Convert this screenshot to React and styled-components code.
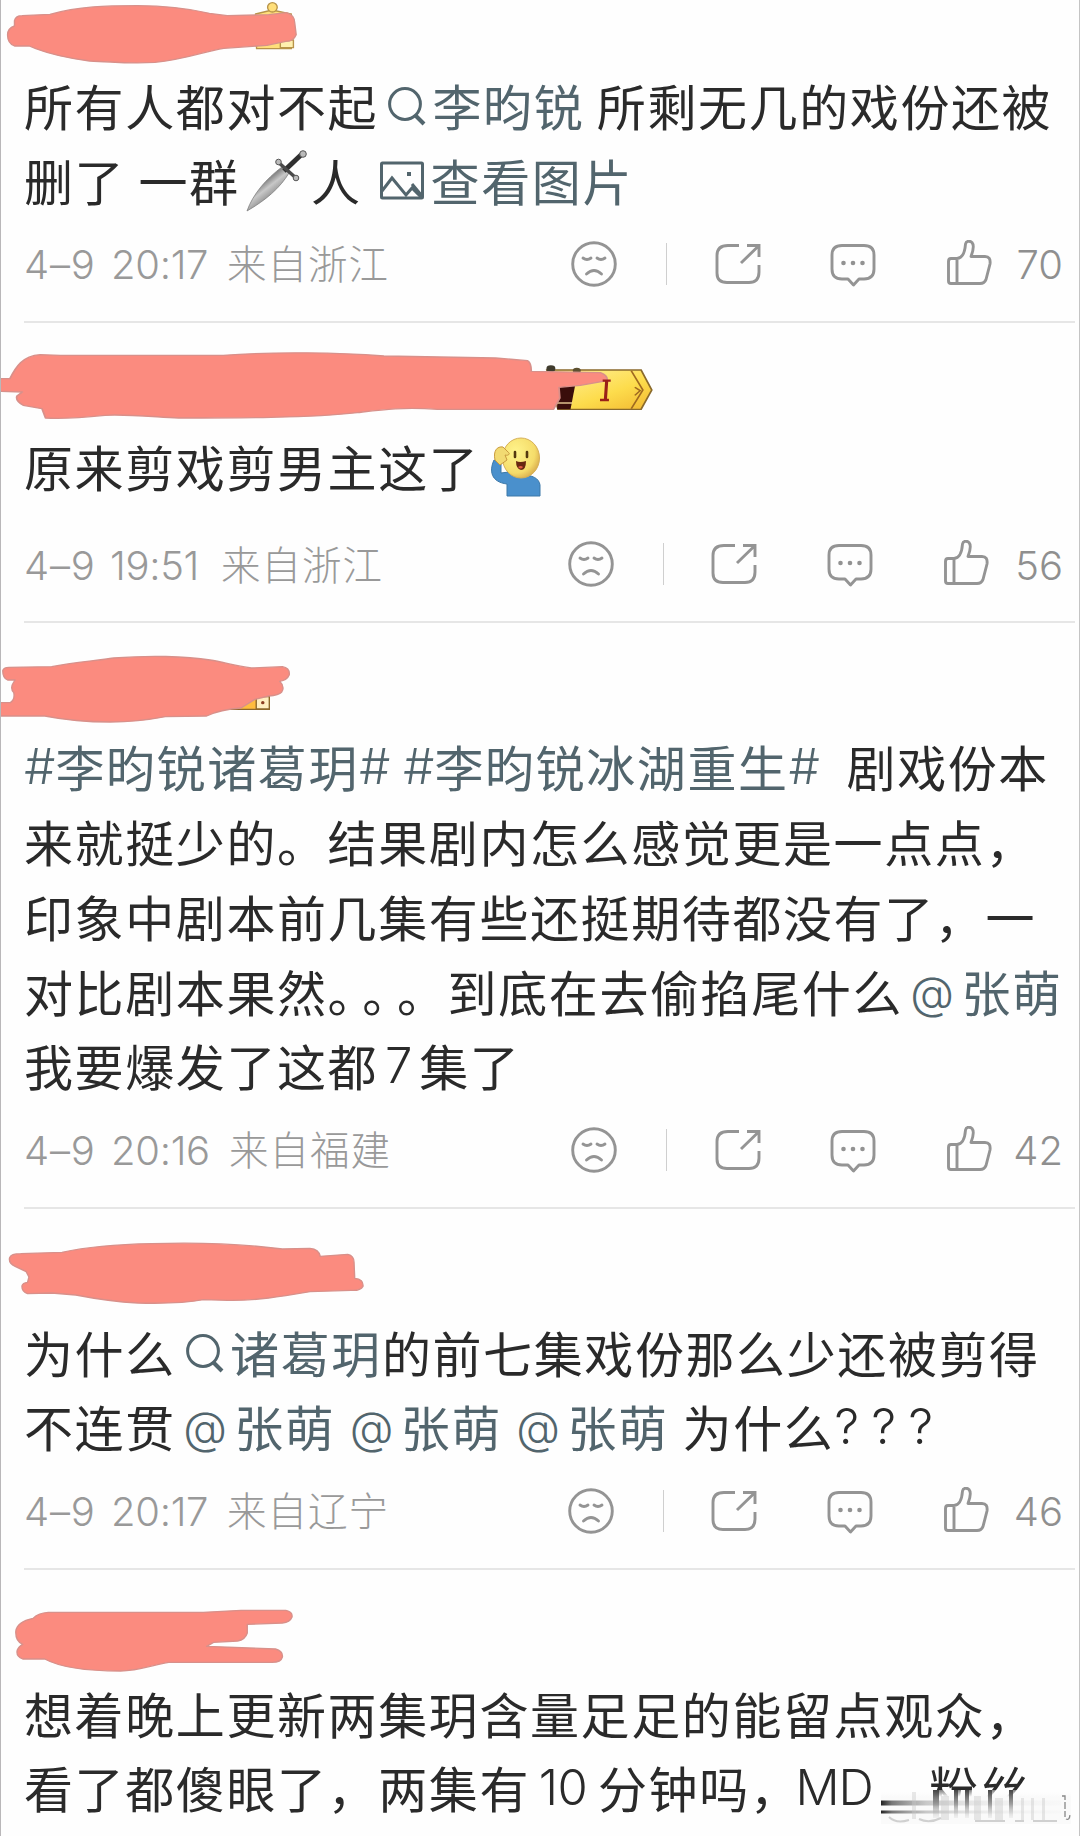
import styled, { createGlobalStyle } from "styled-components"

/* Styling*/
const GlobalStyle = createGlobalStyle`
body {
  margin: 0;
  background: #fefefe;
}
`;
const Page = styled.main`
box-sizing: border-box;
width: 1080px;
height: 1836px;
overflow: hidden;
border-left: 1px solid #b9b7b9;
border-right: 1px solid #c4c4c4;
background: #fefefe;
font-family: Inter, "Noto Sans CJK SC", sans-serif;
text-spacing-trim: space-all;
`;
const Comment = styled.article`
display: flex;
flex-direction: column;
`;
const Head = styled.header`
height: ${(p) => p.$height}px;
margin-left: -1px;
flex: none;
`;
const Scribble = styled.svg`
display: block;
height: 100%;
width: ${(p) => p.$width}px;
`;
const Body = styled.div`
padding: 0 0 ${(p) => p.$extra || 0}px 23px;
`;
const Line = styled.div`
position: relative;
display: flex;
align-items: center;
height: 74.8px;
white-space: pre;
`;
const Run = styled.span`
padding-bottom: 4px;
font-family: "Noto Sans CJK SC", sans-serif;
font-size: 49px;
line-height: 70.8px;
letter-spacing: ${(p) => p.$spacing ?? 1.6}px;
color: ${(p) => (p.$link ? "#52656d" : "#2a2a2a")};
`;
const Latin = styled(Run)`
flex: none;
width: ${(p) => p.$width}px;
padding-bottom: 2px;
font-family: Inter, sans-serif;
font-weight: 350;
text-align: ${(p) => p.$align || "center"};
`;
const At = styled(Latin)`
padding-bottom: 0;
font-size: 45px;
`;
const Gap = styled.span`
flex: none;
width: ${(p) => p.$width}px;
`;
const Inline = styled.svg`
flex: none;
width: ${(p) => p.$width}px;
height: 64px;
fill: none;
stroke: #52656d;
stroke-width: 3;
`;
const Footer = styled.footer`
display: flex;
align-items: center;
height: 88.8px;
margin: 0 4px 0 23px;
padding-bottom: 12.6px;
border-bottom: 2px solid #e6e6e6;
color: #999;
`;
const Stamp = styled.span`
width: ${(p) => p.$width}px;
padding-top: 2px;
font-size: 40px;
font-weight: 300;
letter-spacing: ${(p) => p.$spacing}px;
white-space: nowrap;
`;
const Region = styled.span`
padding-bottom: 4px;
font-family: "Noto Sans CJK SC", sans-serif;
font-size: 39.5px;
font-weight: 300;
letter-spacing: 1px;
`;
const Actions = styled.div`
display: flex;
align-items: center;
margin-left: auto;
padding-right: 12px;
`;
const Icon = styled.svg`
width: 46px;
height: 48px;
margin-right: ${(p) => p.$after}px;
fill: none;
stroke: #949494;
stroke-width: 2.9;
stroke-linecap: round;
stroke-linejoin: round;
`;
const Separator = styled.i`
width: 1px;
height: 42px;
margin-right: 47.5px;
background: #cfcfcf;
`;
const Count = styled.span`
width: ${(p) => p.$width}px;
padding-top: 2px;
font-size: 40px;
font-weight: 350;
text-align: right;
white-space: nowrap;
color: #8f8f8f;
`;
const Smear = styled.svg`
position: absolute;
left: 857px;
top: 38px;
width: 192px;
height: 36px;
`;
/*Styling End*/

const Search = () => (
  <Inline $width={54.3} viewBox="0 0 54.3 64">
    <circle cx="27" cy="29" r="15.4" />
    <path d="M38 41l8 8" strokeWidth="4" />
  </Inline>
)

const Picture = () => (
  <Inline $width={52} viewBox="0 0 52 64">
    <rect x="2.5" y="13" width="41" height="35" rx="1" />
    <path d="M3 41l10-13 14 17 6-7 10 10M33 34l10 12" />
    <path d="M28 22h4v4h-4z" fill="#52656d" stroke="none" />
  </Inline>
)

const Dagger = () => (
  <Inline $width={71.3} viewBox="0 0 71.3 64">
    <defs>
      <linearGradient id="blade" x1="0.3" y1="0.3" x2="0.6" y2="0.7">
        <stop offset="0" stopColor="#5a5a5a" />
        <stop offset="0.5" stopColor="#c8c8c8" />
        <stop offset="1" stopColor="#8a8a8a" />
      </linearGradient>
    </defs>
    <path d="M7 61C13 44 26 29 42 17L49 23C40 38 26 50 7 61z" fill="url(#blade)" stroke="#808080" strokeWidth="0.8" />
    <path d="M44 21L62 4" stroke="#2f2f2f" strokeWidth="5" />
    <path d="M38 12L56 28" stroke="#4a4a4a" strokeWidth="3.500" />
    <g fill="#bbb" stroke="#555" strokeWidth="1">
      <circle cx="38.500" cy="12" r="2.800" />
      <circle cx="56" cy="28" r="2.800" />
      <circle cx="63" cy="4" r="3.300" />
    </g>
  </Inline>
)

const Salute = () => (
  <Inline $width={80} viewBox="0 0 80 64" stroke="none">
    <defs>
      <radialGradient id="face" cx="0.35" cy="0.35" r="0.75">
        <stop offset="0" stopColor="#fff48c" />
        <stop offset="0.7" stopColor="#f5dc6a" />
        <stop offset="1" stopColor="#d5a548" />
      </radialGradient>
    </defs>
    <path d="M15 24C10 35 12 46 28 48V60H61V49C60 42 53 39 43 39L30 36 22 37 22 27z" fill="#4a90cc" stroke="#3c78a8" strokeWidth="1" />
    <ellipse cx="42" cy="22" rx="18.500" ry="20" fill="url(#face)" stroke="#d6b057" strokeWidth="1" />
    <path d="M16 24C14 15 18 10 24 11L29 16C32 18 29 20 26 19L28 24 21 29z" fill="#f2da72" stroke="#c99b40" strokeWidth="1" />
    <path d="M36 16v5M48 16v5" stroke="#54380f" strokeWidth="2.600" strokeLinecap="round" />
    <path d="M37 25Q41 27 47 25Q47 34 42 34Q37 33 37 25z" fill="#682711" stroke="none" />
    <path d="M39 31q3-2 5 0q-2 3-5 0" fill="#e35c43" stroke="none" />
  </Inline>
)

const Mention = ({ name }) => (
  <>
    <At $link $width={58.4} $spacing={0}>@</At>
    <Run $link>{name}</Run>
  </>
)

const Meta = ({ date, time, region, width, dateWidth = 87, count, countWidth }) => (
  <Footer>
    <Stamp $width={dateWidth} $spacing={0.8}>{date}</Stamp>
    <Stamp $width={width} $spacing={-0.3}>{time}</Stamp>
    <Region>{region}</Region>
    <Actions>
      <Icon $after={49} viewBox="0 0 46 48">
        <circle cx="23" cy="24" r="21.300" />
        <path d="M12 18q4 3 8 0M26 18q4 3 8 0M15.500 34q7.500-7 15 0" />
      </Icon>
      <Separator />
      <Icon $after={69.5} viewBox="0 0 46 48">
        <path strokeLinecap="butt" d="M24 5.500H13Q2 5.500 2 15.500V33Q2 42.500 12 42.500H34Q44 42.500 44 32V25" />
        <path strokeLinecap="butt" strokeLinejoin="miter" d="M32 5.500H44V17M43.500 6L26 23" />
      </Icon>
      <Icon $after={70} viewBox="0 0 46 48">
        <path d="M12 5.500H34Q44 5.500 44 15V29Q44 39 34 39H29L23.500 45 18 39H12Q2 39 2 29V15Q2 5.500 12 5.500z" />
        <g fill="#929292" stroke="none">
          <circle cx="13.500" cy="23" r="2.300" />
          <circle cx="23" cy="23" r="2.300" />
          <circle cx="32.500" cy="23" r="2.300" />
        </g>
      </Icon>
      <Icon $after={0} viewBox="0 0 46 48">
        <path d="M11 18.500H5Q2.500 18.500 2.500 21.500V41Q2.500 43.500 5 43.500H34Q38.500 43.500 40 39.500L44 24Q45 16.500 39 16.500H25Q29 6 26 2.500C23 0 20 1.500 19.500 4Q18.500 18 11 18.500zM11 18.500V43.500" />
      </Icon>
      <Count $width={countWidth}>{count}</Count>
    </Actions>
  </Footer>
)

// marker strokes over the user names
const marker = { fill: "#fb8b7f", stroke: "#d8908a", strokeWidth: 4, strokeLinejoin: "round" }

function App() {
  return (
    <Page>
      <GlobalStyle />

      <Comment>
        <Head $height={70}>
          <Scribble $width={540} viewBox="0 0 1568 210" preserveAspectRatio="none">
            <g stroke="#b8944a" strokeWidth="4" fill="#ffdf7a">
              <path d="M742 42L790 30 846 42V146H745z" />
              <circle cx="791" cy="22" r="14" />
              <path d="M814 120H852V143H814z" fill="#fff0b0" />
            </g>
            <path {...marker} d="M42 62Q46 47 64 47L145 43C230 18 310 17 400 17C480 17 540 24 608 40L660 47L780 44L832 38Q856 45 856 70L860 104Q852 124 830 124L775 136L650 145C590 155 540 178 450 187C370 192 330 185 260 183C200 175 150 164 104 146L85 138H42Q22 130 22 105Q22 85 42 78z" />
          </Scribble>
        </Head>
        <Body>
          <Line>
            <Run>所有人都对不起</Run>
            <Search />
            <Run $link>李昀锐</Run>
            <Gap $width={12.5} />
            <Run>所剩无几的戏份还被</Run>
          </Line>
          <Line>
            <Run>删了</Run>
            <Gap $width={13.3} />
            <Run>一群</Run>
            <Dagger />
            <Run>人</Run>
            <Gap $width={17} />
            <Picture />
            <Run $link>查看图片</Run>
          </Line>
        </Body>
        <Meta date="4–9" time="20:17" width={116} region="来自浙江" count="70" countWidth={71} />
      </Comment>

      <Comment>
        <Head $height={108}>
          <Scribble $width={700} viewBox="0 -21 1568 324" preserveAspectRatio="none">
            <defs>
              <linearGradient id="gold" x1="0" y1="0" x2="1" y2="1">
                <stop offset="0" stopColor="#fff2a0" />
                <stop offset="0.6" stopColor="#fddc4c" />
                <stop offset="1" stopColor="#f2b830" />
              </linearGradient>
            </defs>
            <path d="M1225 120H1436L1460 180 1436 238H1250z" fill="url(#gold)" stroke="#8a6a2c" strokeWidth="4" />
            <path d="M1414 122L1440 180 1414 236M1422 172L1434 182 1422 196" fill="none" stroke="#a06a20" strokeWidth="4" />
            <circle cx="1234" cy="116" r="10" fill="#3f3b2d" />
            <circle cx="1292" cy="122" r="9" fill="#5d5030" />
            <path d="M1250 168H1288L1278 238H1248z" fill="#3a0d0b" />
            <path d="M1248 219H1282" stroke="#f5d9a0" strokeWidth="4" />
            <path d="M0 146H22C36 110 50 78 90 74L135 76H500C620 64 760 68 860 78L1110 84L1182 92Q1190 98 1190 124L1345 128Q1362 136 1360 152L1300 166L1252 172L1254 204L1240 238L980 238C900 230 850 240 800 248C700 264 520 264 400 264C320 258 270 252 235 256Q150 268 102 264L94 236L52 226Q34 212 38 198L50 186L0 184z" {...marker} />
            <path d="M1350 152H1368M1359 152L1356 210M1344 210H1364" stroke="#9a2018" strokeWidth="7" fill="none" />
          </Scribble>
        </Head>
        <Body $extra={14}>
          <Line>
            <Run>原来剪戏剪男主这了</Run>
            <Salute />
          </Line>
        </Body>
        <Meta date="4–9" time="19:51" dateWidth={86} width={111} region="来自浙江" count="56" countWidth={74.5} />
      </Comment>

      <Comment>
        <Head $height={108}>
          <Scribble $width={540} viewBox="0 -51 1568 324" preserveAspectRatio="none">
            <path d="M660 165H782V208H660z" fill="#ffbd3e" stroke="#8d682a" strokeWidth="4" />
            <path d="M744 170H782V207H744z" fill="#ffefc0" stroke="#8d682a" strokeWidth="4" />
            <circle cx="763" cy="188" r="5" fill="#8b3d20" />
            <path {...marker} d="M8 92Q10 82 26 82L150 80C210 68 280 62 330 54C430 46 540 48 610 60C650 66 680 78 730 84L820 80Q842 84 840 104Q834 120 812 124Q828 140 818 156Q810 166 780 168L740 178L700 204Q640 208 600 228L480 230C430 240 380 246 320 246C230 246 180 238 130 228H0V188H30Q44 178 40 158Q28 144 40 126L44 120H22Q8 114 8 92z" />
          </Scribble>
        </Head>
        <Body>
          <Line>
            <Latin $link $width={31.4} $spacing={0}>#</Latin>
            <Run $link>李昀锐诸葛玥</Run>
            <Latin $link $width={31.4} $spacing={0}>#</Latin>
            <Gap $width={12.6} />
            <Latin $link $width={31.4} $spacing={0}>#</Latin>
            <Run $link>李昀锐冰湖重生</Run>
            <Latin $link $width={31.4} $spacing={0}>#</Latin>
            <Gap $width={26.6} />
            <Run>剧戏份本</Run>
          </Line>
          <Line>
            <Run>来就挺少的。结果剧内怎么感觉更是一点点，</Run>
          </Line>
          <Line>
            <Run>印象中剧本前几集有些还挺期待都没有了，一</Run>
          </Line>
          <Line>
            <Run>对比剧本果然</Run>
            <Run $spacing={-14.3}>。。</Run>
            <Run>。到底在去偷掐尾什么</Run>
            <Mention name="张萌" />
          </Line>
          <Line>
            <Run>我要爆发了这都</Run>
            <Latin $width={41} $spacing={0}>7</Latin>
            <Run>集了</Run>
          </Line>
        </Body>
        <Meta date="4–9" time="20:16" width={118} region="来自福建" count="42" countWidth={71} />
      </Comment>

      <Comment>
        <Head $height={108}>
          <Scribble $width={540} viewBox="0 804 1568 324" preserveAspectRatio="none">
            <path {...marker} d="M28 950Q32 938 60 938L180 934C260 916 340 910 440 908C560 904 700 908 820 924L900 922Q926 924 930 946L1010 940Q1028 944 1028 964L1030 1012Q1056 1014 1054 1036Q1046 1050 1020 1048L900 1052C820 1066 740 1080 660 1078L590 1076C540 1086 470 1088 400 1086C330 1082 270 1072 220 1062L150 1056L80 1058Q62 1052 64 1034Q66 1026 80 1024L84 1008L76 992L44 976Q24 966 28 950z" />
          </Scribble>
        </Head>
        <Body>
          <Line>
            <Run>为什么</Run>
            <Search />
            <Run $link>诸葛玥</Run>
            <Run>的前七集戏份那么少还被剪得</Run>
          </Line>
          <Line>
            <Run>不连贯</Run>
            <Mention name="张萌" />
            <Gap $width={7} />
            <Mention name="张萌" />
            <Gap $width={7} />
            <Mention name="张萌" />
            <Gap $width={14} />
            <Run>为什么</Run>
            <Latin $width={37} $spacing={0} $align="left">?</Latin>
            <Latin $width={37} $spacing={0} $align="left">?</Latin>
            <Latin $width={37} $spacing={0} $align="left">?</Latin>
          </Line>
        </Body>
        <Meta date="4–9" time="20:17" width={116} region="来自辽宁" count="46" countWidth={74.5} />
      </Comment>

      <Comment>
        <Head $height={108}>
          <Scribble $width={540} viewBox="0 -33 1568 324" preserveAspectRatio="none">
            <path {...marker} d="M46 150Q50 122 96 112Q110 96 140 94H590L700 88L830 88Q850 92 848 108Q842 124 820 126L718 130V156Q712 176 690 180L620 184L600 196L800 204Q822 210 820 228Q816 244 790 244H490C450 250 400 270 350 270C260 270 180 262 130 234L66 234Q46 226 50 208Q54 196 66 190Q44 180 46 150z" />
          </Scribble>
        </Head>
        <Body>
          <Line>
            <Run>想着晚上更新两集玥含量足足的能留点观众，</Run>
          </Line>
          <Line>
            <Run>看了都傻眼了，两集有</Run>
            <Latin $width={66} $spacing={-0.5}>10</Latin>
            <Gap $width={2} />
            <Run>分钟吗</Run>
            <Run $spacing={-3.4}>，</Run>
            <Latin $width={83} $spacing={-1} $align="left">MD</Latin>
            <Run>，粉丝</Run>
            <Smear viewBox="0 0 192 36">
              <defs>
                <linearGradient id="veil" x1="0" y1="0" x2="0" y2="1">
                  <stop offset="0" stopColor="#fff" stopOpacity="0.4" />
                  <stop offset="0.2" stopColor="#fafafa" />
                </linearGradient>
                <linearGradient id="streak" x1="0" y1="0" x2="0" y2="1">
                  <stop offset="0" stopColor="#444" />
                  <stop offset="0.5" stopColor="#8a8a8a" stopOpacity="0.8" />
                  <stop offset="1" stopColor="#ccc" stopOpacity="0.2" />
                </linearGradient>
                <linearGradient id="fade">
                  <stop offset="0" stopColor="#222" />
                  <stop offset="0.06" stopColor="#777" />
                  <stop offset="0.25" stopColor="#bbb" stopOpacity="0.8" />
                  <stop offset="0.6" stopColor="#ddd" stopOpacity="0.4" />
                  <stop offset="1" stopColor="#eee" stopOpacity="0.2" />
                </linearGradient>
              </defs>
              <rect width="190" height="34" fill="url(#veil)" />
              <rect x="0" y="10.500" width="180" height="5" fill="url(#fade)" />
              <rect x="0" y="20.500" width="180" height="3" fill="url(#fade)" />
              <g fill="url(#streak)">
                <rect x="52" y="0" width="6" height="28" />
                <rect x="73" y="0" width="4" height="28" />
                <rect x="84" y="0" width="4" height="28" />
                <rect x="107" y="0" width="4" height="28" />
                <rect x="128" y="0" width="4" height="28" />
              </g>
              <g fill="#c8c8c8" opacity="0.4">
                <rect x="31" y="2" width="4" height="27" />
                <rect x="60" y="6" width="8" height="24" />
                <rect x="93" y="6" width="7" height="24" />
                <rect x="114" y="8" width="8" height="22" />
                <rect x="140" y="8" width="3" height="22" />
                <rect x="150" y="8" width="3" height="22" />
                <rect x="161" y="8" width="3" height="22" />
              </g>
              <path d="M8 27q7 7 20 3M38 29q10 5 22-1M94 31h30M134 31h9M152 31h24" fill="none" stroke="#d0d0d0" strokeWidth="2" />
              <path d="M181 6h3v21M185 29q4 2 4-6" fill="none" stroke="#888" strokeWidth="1.300" strokeDasharray="7 2" />
            </Smear>
          </Line>
        </Body>
      </Comment>
    </Page>
  )
}

export default App
